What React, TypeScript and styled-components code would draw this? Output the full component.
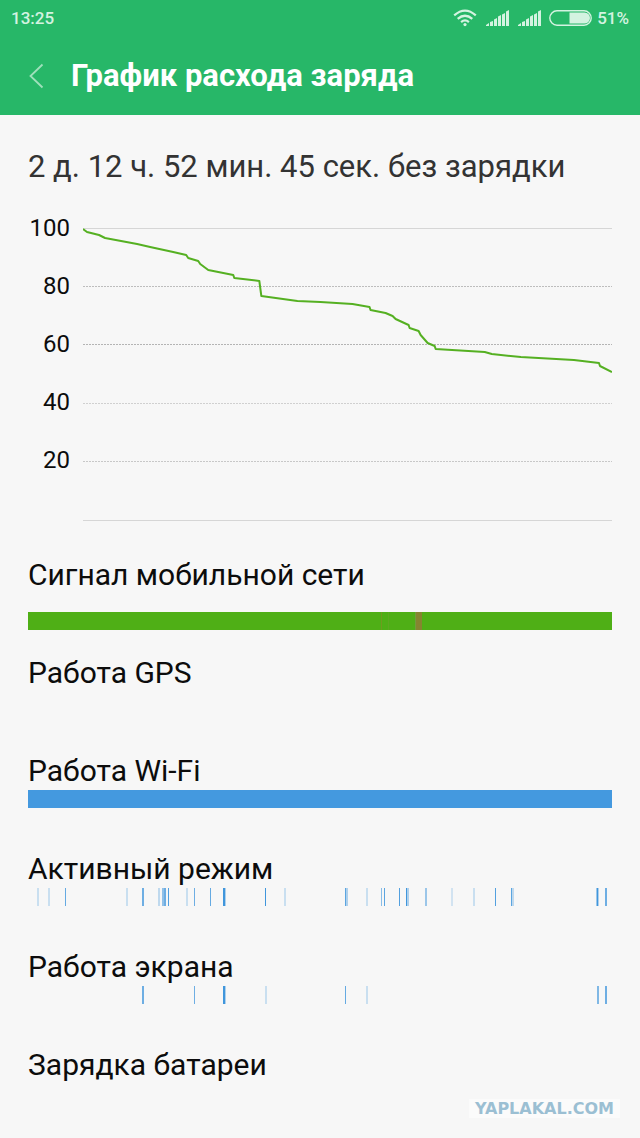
import React from "react";
import styled, { createGlobalStyle } from "styled-components";

const GlobalStyle = createGlobalStyle`
  *, *::before, *::after { box-sizing: border-box; }
  body {
    margin: 0;
    background: #f7f7f7;
    color: #0c0c0c;
    font-family: Roboto, "Noto Sans", sans-serif;
  }
`;

const Page = styled.div`
  min-height: 100vh;
  background: #f7f7f7;
`;

const TopBar = styled.header`
  background: #27b768;
`;

const StatusBar = styled.div`
  display: flex;
  align-items: center;
  justify-content: space-between;
  height: 36px;
  padding: 0 11px;
  color: #d4f3e1;
  font-size: 17px;
  font-weight: 500;
  line-height: 20px;
`;

const StatusIcons = styled.div`
  display: flex;
  align-items: center;
  gap: 8px;
`;

const Reception = styled.div`
  display: flex;
  align-items: center;
  gap: 9px;
`;

const BatteryGroup = styled.div`
  display: flex;
  align-items: center;
  gap: 5px;
`;

const TitleBar = styled.div`
  display: flex;
  align-items: center;
  height: 79px;
  padding: 0 28px;
  gap: 27px;
`;

const BackButton = styled.button`
  display: flex;
  padding: 0;
  border: 0;
  background: none;
  cursor: pointer;
`;

const Title = styled.h1`
  margin: 0;
  color: #fff;
  font-size: 31px;
  font-weight: 700;
  line-height: 40px;
`;

const Content = styled.main`
  padding: 32px 28px 0;
`;

const Duration = styled.p`
  margin: 0 0 12px;
  color: #333;
  font-size: 31px;
  line-height: 40px;
`;

const Chart = styled.section`
  display: grid;
  grid-template-columns: 42px minmax(0, 1fr);
  column-gap: 13px;
  margin-bottom: 35px;
`;

const AxisLabels = styled.div`
  display: flex;
  flex-direction: column;
`;

const AxisLabel = styled.span`
  height: 58px;
  font-size: 24px;
  line-height: 58px;
  text-align: right;
`;

const Plot = styled.svg`
  display: block;
  width: 100%;
  height: 323px;
`;

const Usage = styled.section`
  height: 98px;
`;

const UsageName = styled.h2`
  margin: 0;
  font-size: 30px;
  font-weight: 400;
  line-height: 36px;
`;

const Track = styled.svg<{ $spaced?: boolean }>`
  display: block;
  width: 100%;
  height: 18px;
  margin-top: ${(p) => (p.$spaced ? 19 : 1)}px;
`;

const Footer = styled.footer`
  display: flex;
  justify-content: flex-end;
  padding: 16px 20px 20px;
`;

const SiteMark = styled.span`
  padding: 0 6px;
  background: #fbfbfb;
  color: #9bbfd3;
  font-family: "DejaVu Sans", sans-serif;
  font-size: 16px;
  font-weight: 700;
  line-height: 19px;
`;

const gridLines = [
  { y: 29, color: "#d6d6d6" },
  { y: 87, color: "#bdbdbd", dotted: true },
  { y: 145, color: "#b4b4b4", dotted: true },
  { y: 204, color: "#d0d0d0", dotted: true },
  { y: 262, color: "#c8c8c8", dotted: true },
  { y: 321, color: "#d6d6d6" },
];

const level: [number, number][] = [
  [0, 30], [4, 33], [16, 36], [22, 39], [54, 45], [67, 48], [90, 53], [103, 56],
  [105, 59], [115, 62], [117, 65], [125, 71], [150, 76], [151, 79], [176, 82],
  [178, 97], [214, 102], [237, 103], [269, 105], [286, 108], [287, 111],
  [302, 114], [309, 117], [312, 120], [325, 126], [326, 129], [335, 132],
  [337, 136], [344, 144], [351, 147], [352, 150], [401, 153], [408, 155],
  [437, 158], [490, 161], [515, 164], [516, 167], [528, 173],
];

type Mark = [x: number, width: number, opacity: number];

const activeMarks: Mark[] = [
  [9, 2, 0.25], [20, 2, 0.25], [37, 1, 0.8], [98, 2, 0.25], [114, 2, 0.75],
  [130, 2, 0.3], [134, 2, 0.55], [136, 2, 0.75], [140, 1, 0.9], [158, 2, 0.25],
  [166, 1, 0.75], [182, 1, 0.8], [195, 2, 1], [197, 1, 0.4], [237, 1, 1],
  [256, 2, 0.25], [317, 1, 0.85], [318, 2, 0.4], [338, 2, 0.25], [353, 1, 0.6],
  [356, 1, 0.85], [371, 1, 0.9], [378, 1, 1], [379, 2, 0.4], [397, 2, 0.5],
  [423, 2, 0.2], [445, 2, 0.25], [467, 1, 0.9], [483, 1, 0.85], [484, 2, 0.3],
  [568, 1, 0.5], [569, 1, 1], [570, 1, 0.4], [577, 2, 0.75],
];

const screenMarks: Mark[] = [
  [114, 2, 0.75], [166, 1, 0.75], [195, 2, 1], [197, 1, 0.4], [237, 2, 0.25],
  [317, 1, 0.8], [338, 2, 0.25], [569, 2, 0.65], [577, 2, 0.75],
];

const Marks = ({ marks }: { marks: Mark[] }) => (
  <Track viewBox="0 0 584 18" preserveAspectRatio="none" aria-hidden="true">
    {marks.map(([x, width, opacity]) => (
      <rect key={x} x={x} width={width} height="18" fill="#4096dc" opacity={opacity} />
    ))}
  </Track>
);

const Wifi = () => (
  <svg width="24" height="18" viewBox="0 0 24 18" fill="none" stroke="currentColor" strokeWidth="2.2" aria-hidden="true">
    <path d="M1.2 6.4Q12-3.2 22.8 6.4M4.7 9.9Q12 3.6 19.3 9.9M8.1 13.1Q12 9.8 15.9 13.1" />
    <circle cx="12" cy="15.6" r="1.6" fill="currentColor" stroke="none" />
  </svg>
);

const Signal = () => (
  <svg width="23" height="16" viewBox="0 0 23 16" fill="currentColor" aria-hidden="true">
    <path d="M0 16v-1l3-2v3zM4 16v-4l3-1v5zM8 16V9.500l3-1.500v8zM12 16V6.500L15 5v11zM16 16V4.500L19 3v13zM20 16V1.500L23 0v16z" />
  </svg>
);

const Battery = () => (
  <svg width="43" height="16" viewBox="0 0 43 16" aria-hidden="true">
    <rect x="0.8" y="0.8" width="41.4" height="14.4" rx="7.2" fill="none" stroke="currentColor" strokeWidth="1.4" />
    <path d="M20.500 2.500h15a5.500 5.500 0 0 1 0 11h-15z" fill="currentColor" />
  </svg>
);

export default function App() {
  return (
    <Page>
      <GlobalStyle />
      <TopBar>
        <StatusBar>
          <span>13:25</span>
          <StatusIcons>
            <Reception>
              <Wifi />
              <Signal />
              <Signal />
            </Reception>
            <BatteryGroup>
              <Battery />
              <span>51%</span>
            </BatteryGroup>
          </StatusIcons>
        </StatusBar>
        <TitleBar>
          <BackButton type="button" aria-label="Назад">
            <svg width="16" height="26" viewBox="0 0 16 26" fill="none" stroke="#9fe0bb" strokeWidth="1.8">
              <path d="M14.500 1.500L2.500 13l12 11.500" />
            </svg>
          </BackButton>
          <Title>График расхода заряда</Title>
        </TitleBar>
      </TopBar>

      <Content>
        <Duration>2 д. 12 ч. 52 мин. 45 сек. без зарядки</Duration>

        <Chart>
          <AxisLabels>
            {[100, 80, 60, 40, 20].map((value) => (
              <AxisLabel key={value}>{value}</AxisLabel>
            ))}
          </AxisLabels>
          <Plot viewBox="0 0 528 323" preserveAspectRatio="none" aria-hidden="true">
            {gridLines.map(({ y, color, dotted }) => (
              <line
                key={y}
                x1="0"
                x2="528"
                y1={y + 0.5}
                y2={y + 0.5}
                stroke={color}
                strokeDasharray={dotted ? "2 1" : undefined}
                vectorEffect="non-scaling-stroke"
              />
            ))}
            <polyline
              points={level.map((point) => point.join(",")).join(" ")}
              fill="none"
              stroke="#55b022"
              strokeWidth="2"
              strokeLinejoin="round"
              vectorEffect="non-scaling-stroke"
            />
          </Plot>
        </Chart>

        <Usage>
          <UsageName>Сигнал мобильной сети</UsageName>
          <Track $spaced viewBox="0 0 584 18" preserveAspectRatio="none" aria-hidden="true">
            <rect width="584" height="18" fill="#4faf16" />
            <rect x="353" width="1" height="18" fill="#6f9c1e" />
            <rect x="360" width="1" height="18" fill="#5da821" />
            <rect x="387" width="1" height="18" fill="#739b3c" />
            <rect x="388" width="6" height="18" fill="#858530" />
          </Track>
        </Usage>
        <Usage>
          <UsageName>Работа GPS</UsageName>
        </Usage>
        <Usage>
          <UsageName>Работа Wi-Fi</UsageName>
          <Track viewBox="0 0 584 18" preserveAspectRatio="none" aria-hidden="true">
            <rect width="584" height="18" fill="#4499df" />
          </Track>
        </Usage>
        <Usage>
          <UsageName>Активный режим</UsageName>
          <Marks marks={activeMarks} />
        </Usage>
        <Usage>
          <UsageName>Работа экрана</UsageName>
          <Marks marks={screenMarks} />
        </Usage>
        <UsageName>Зарядка батареи</UsageName>
      </Content>

      <Footer>
        <SiteMark>YAPLAKAL.COM</SiteMark>
      </Footer>
    </Page>
  );
}
